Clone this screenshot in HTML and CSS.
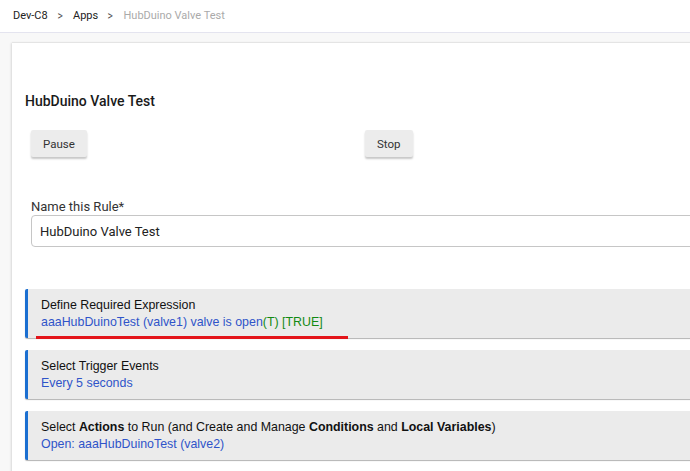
FILE: index.html
```html
<!DOCTYPE html>
<html lang="en">
<head>
    <meta charset="UTF-8">
    <meta name="viewport" content="width=device-width, initial-scale=1.0">
    <title>HubDuino Valve Test</title>
    <link rel="stylesheet" href="styles.css">
</head>
<body>
    <div class="topbar">
        <span class="crumb">Dev-C8</span>
        <span class="sep">&gt;</span>
        <span class="crumb">Apps</span>
        <span class="sep">&gt;</span>
        <span class="crumb current">HubDuino Valve Test</span>
    </div>

    <div class="page">
        <div class="card">
            <h2 class="title">HubDuino Valve Test</h2>

            <div class="actions">
                <div><button class="btn">Pause</button></div>
                <div><button class="btn">Stop</button></div>
            </div>

            <label class="label" for="rulename">Name this Rule*</label>
            <input id="rulename" class="field" type="text" value="HubDuino Valve Test">

            <div class="sections">
                <div class="section">
                    <div class="sec-title">Define Required Expression</div>
                    <div class="sec-value">aaaHubDuinoTest (valve1) valve is open<span class="ok">(T) [TRUE]</span></div>
                    <div class="mark"></div>
                </div>
                <div class="section">
                    <div class="sec-title">Select Trigger Events</div>
                    <div class="sec-value">Every 5 seconds</div>
                </div>
                <div class="section">
                    <div class="sec-title">Select <b>Actions</b> to Run (and Create and Manage <b>Conditions</b> and <b>Local Variables</b>)</div>
                    <div class="sec-value">Open: aaaHubDuinoTest (valve2)</div>
                </div>
            </div>
        </div>
    </div>
</body>
</html>
```

FILE: styles.css
```css
body {
    margin: 0;
    font-family: Roboto, 'Liberation Sans', sans-serif;
    background-color: #f8f8f8;
    overflow: hidden;
    height: 471px;
}

.topbar {
    height: 33px;
    background-color: #fff;
    border-bottom: 1px solid #e4e4ef;
    display: flex;
    align-items: center;
    padding-left: 13px;
    padding-bottom: 1px;
    box-sizing: border-box;
    font-size: 11px;
    color: #222;
}

.sep {
    margin: 0 10px 0 9px;
    color: #555;
    font-size: 12px;
    transform: scaleX(0.85);
}

.crumb.current {
    color: #aaa;
}

.page {
    padding: 10px 0 0 12px;
}

.card {
    width: 720px;
    height: 440px;
    background-color: #fff;
    box-shadow: -1px 0 2px rgba(0, 0, 0, 0.12), 0 -1px 1px rgba(0, 0, 0, 0.04);
    padding: 48px 0 0 13px;
    box-sizing: border-box;
}

.title {
    margin: 0;
    font-size: 14px;
    font-weight: 500;
    line-height: 20px;
    color: #1a1a1a;
}

.actions {
    display: grid;
    grid-template-columns: 334px 1fr;
    margin: 19px 0 0 6px;
}

.btn {
    font-family: Roboto, sans-serif;
    font-size: 11.5px;
    color: #333;
    background-color: #ececec;
    border: none;
    border-radius: 2px;
    height: 27px;
    padding: 0 12px;
    box-shadow: 0 2px 2px rgba(0, 0, 0, 0.22);
    cursor: pointer;
}

.label {
    display: block;
    margin: 42px 0 0 6px;
    font-size: 13px;
    line-height: 15px;
    color: #333;
}

.field {
    display: block;
    margin: 1px 0 0 6px;
    width: 700px;
    height: 32px;
    box-sizing: border-box;
    border: 1px solid #c6c6c6;
    border-radius: 4px;
    padding: 0 8px;
    font-family: Roboto, sans-serif;
    font-size: 13px;
    color: #222;
}

.sections {
    margin-top: 42px;
    display: flex;
    flex-direction: column;
    gap: 12px;
}

.section {
    position: relative;
    background-color: #ebebeb;
    border-left: 3px solid #1b6fd1;
    border-radius: 2px 0 0 2px;
    box-shadow: 0 1px 1px rgba(0, 0, 0, 0.3);
    padding: 8px 0 7px 13px;
    font-family: Arial, 'Liberation Sans', sans-serif;
    font-size: 12.4px;
    line-height: 17px;
}

.sec-title {
    color: #111;
}

.sec-value {
    color: #2f54c9;
}

.ok {
    color: #138a13;
}

/* red annotation stroke */
.mark {
    position: absolute;
    left: 8px;
    bottom: -1px;
    width: 312px;
    height: 3px;
    background-color: #e3141a;
}
```
